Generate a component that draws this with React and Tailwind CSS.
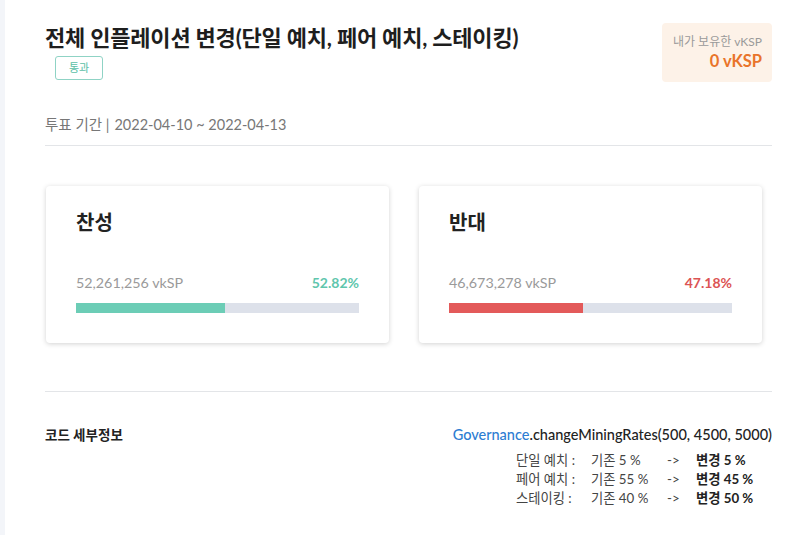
import React from "react";

const font = { fontFamily: "Lato, 'Noto Sans CJK KR', 'Noto Sans', sans-serif" };

function VoteCard({ title, amount, pct, fill, color, textColor }) {
  return (
    <div className="w-[343px] h-[157px] bg-white rounded-[4px] shadow-[0_1px_5px_rgba(0,0,0,0.18)] px-[30px] pt-[24px]">
      <div className="text-[20px] leading-[24px] font-bold text-[#222]">{title}</div>
      <div className="mt-[39px] flex justify-between items-center leading-[20px]">
        <span className="text-[14.3px] text-[#9a9a9a]">{amount}</span>
        <span className={`text-[14px] font-bold ${textColor}`}>{pct}</span>
      </div>
      <div className="mt-[10px] h-[10px] bg-[#dde1ea] flex">
        <div className={`h-full ${color}`} style={{ width: fill }} />
      </div>
    </div>
  );
}

export default function App() {
  return (
    <div className="w-[800px] h-[535px] flex bg-white overflow-hidden" style={font}>
      <div className="w-[5px] h-full bg-[#f3f5f9]" />
      <div className="flex-1 pl-[40px] pr-[28px] pt-[23px]">
        <div className="flex justify-between items-start">
          <div className="pt-[1px]">
            <div className="text-[22px] leading-[28px] font-bold text-[#1e1e1e] tracking-[-0.2px]">
              전체 인플레이션 변경(단일 예치, 페어 예치, 스테이킹)
            </div>
            <div className="mt-[4px] ml-[10px] w-[48px] h-[24px] border border-[#8fd3c5] rounded-[3px] flex items-center justify-center text-[11px] text-[#5cbfa8]">
              통과
            </div>
          </div>
          <div className="w-[110px] h-[59px] bg-[#fdf2e8] rounded-[4px] flex flex-col items-end justify-center pr-[10px]">
            <div className="text-[12px] leading-[16px] text-[#9a9a9a]">내가 보유한 vKSP</div>
            <div className="text-[16.5px] leading-[22px] font-bold text-[#e9742a]">0 vKSP</div>
          </div>
        </div>

        <div className="mt-[33px] text-[14.5px] leading-[20px] text-[#777] flex">
          <span>투표 기간 |</span>
          <span className="ml-[5px]">2022-04-10 ~ 2022-04-13</span>
        </div>

        <div className="mt-[10px] border-t border-[#e3e5e8]" />

        <div className="mt-[40px] ml-[1px] flex gap-[30px]">
          <VoteCard
            title="찬성"
            amount="52,261,256 vkSP"
            pct="52.82%"
            fill="52.82%"
            color="bg-[#6ccdb6]"
            textColor="text-[#5fc6ad]"
          />
          <VoteCard
            title="반대"
            amount="46,673,278 vkSP"
            pct="47.18%"
            fill="47.18%"
            color="bg-[#e35a5a]"
            textColor="text-[#dc5454]"
          />
        </div>

        <div className="mt-[48px] border-t border-[#e3e5e8]" />

        <div className="mt-[33px] flex justify-between items-start">
          <div className="text-[13.5px] leading-[20px] font-bold text-[#222]">코드 세부정보</div>
          <div className="flex flex-col items-end">
            <div className="text-[14.5px] leading-[20px] font-medium text-[#222]">
              <span className="text-[#2d7dd2]">Governance</span>.changeMiningRates(500, 4500, 5000)
            </div>
            <div className="mt-[6px] mr-[16px] grid grid-cols-[75px_76px_29px_60px] text-[13.3px] leading-[19px] text-[#444]">
              <span>단일 예치 :</span>
              <span>기존 5 %</span>
              <span>-&gt;</span>
              <span className="font-bold text-[#222]">변경 5 %</span>
              <span>페어 예치 :</span>
              <span>기존 55 %</span>
              <span>-&gt;</span>
              <span className="font-bold text-[#222]">변경 45 %</span>
              <span>스테이킹 :</span>
              <span>기존 40 %</span>
              <span>-&gt;</span>
              <span className="font-bold text-[#222]">변경 50 %</span>
            </div>
          </div>
        </div>
      </div>
    </div>
  );
}
